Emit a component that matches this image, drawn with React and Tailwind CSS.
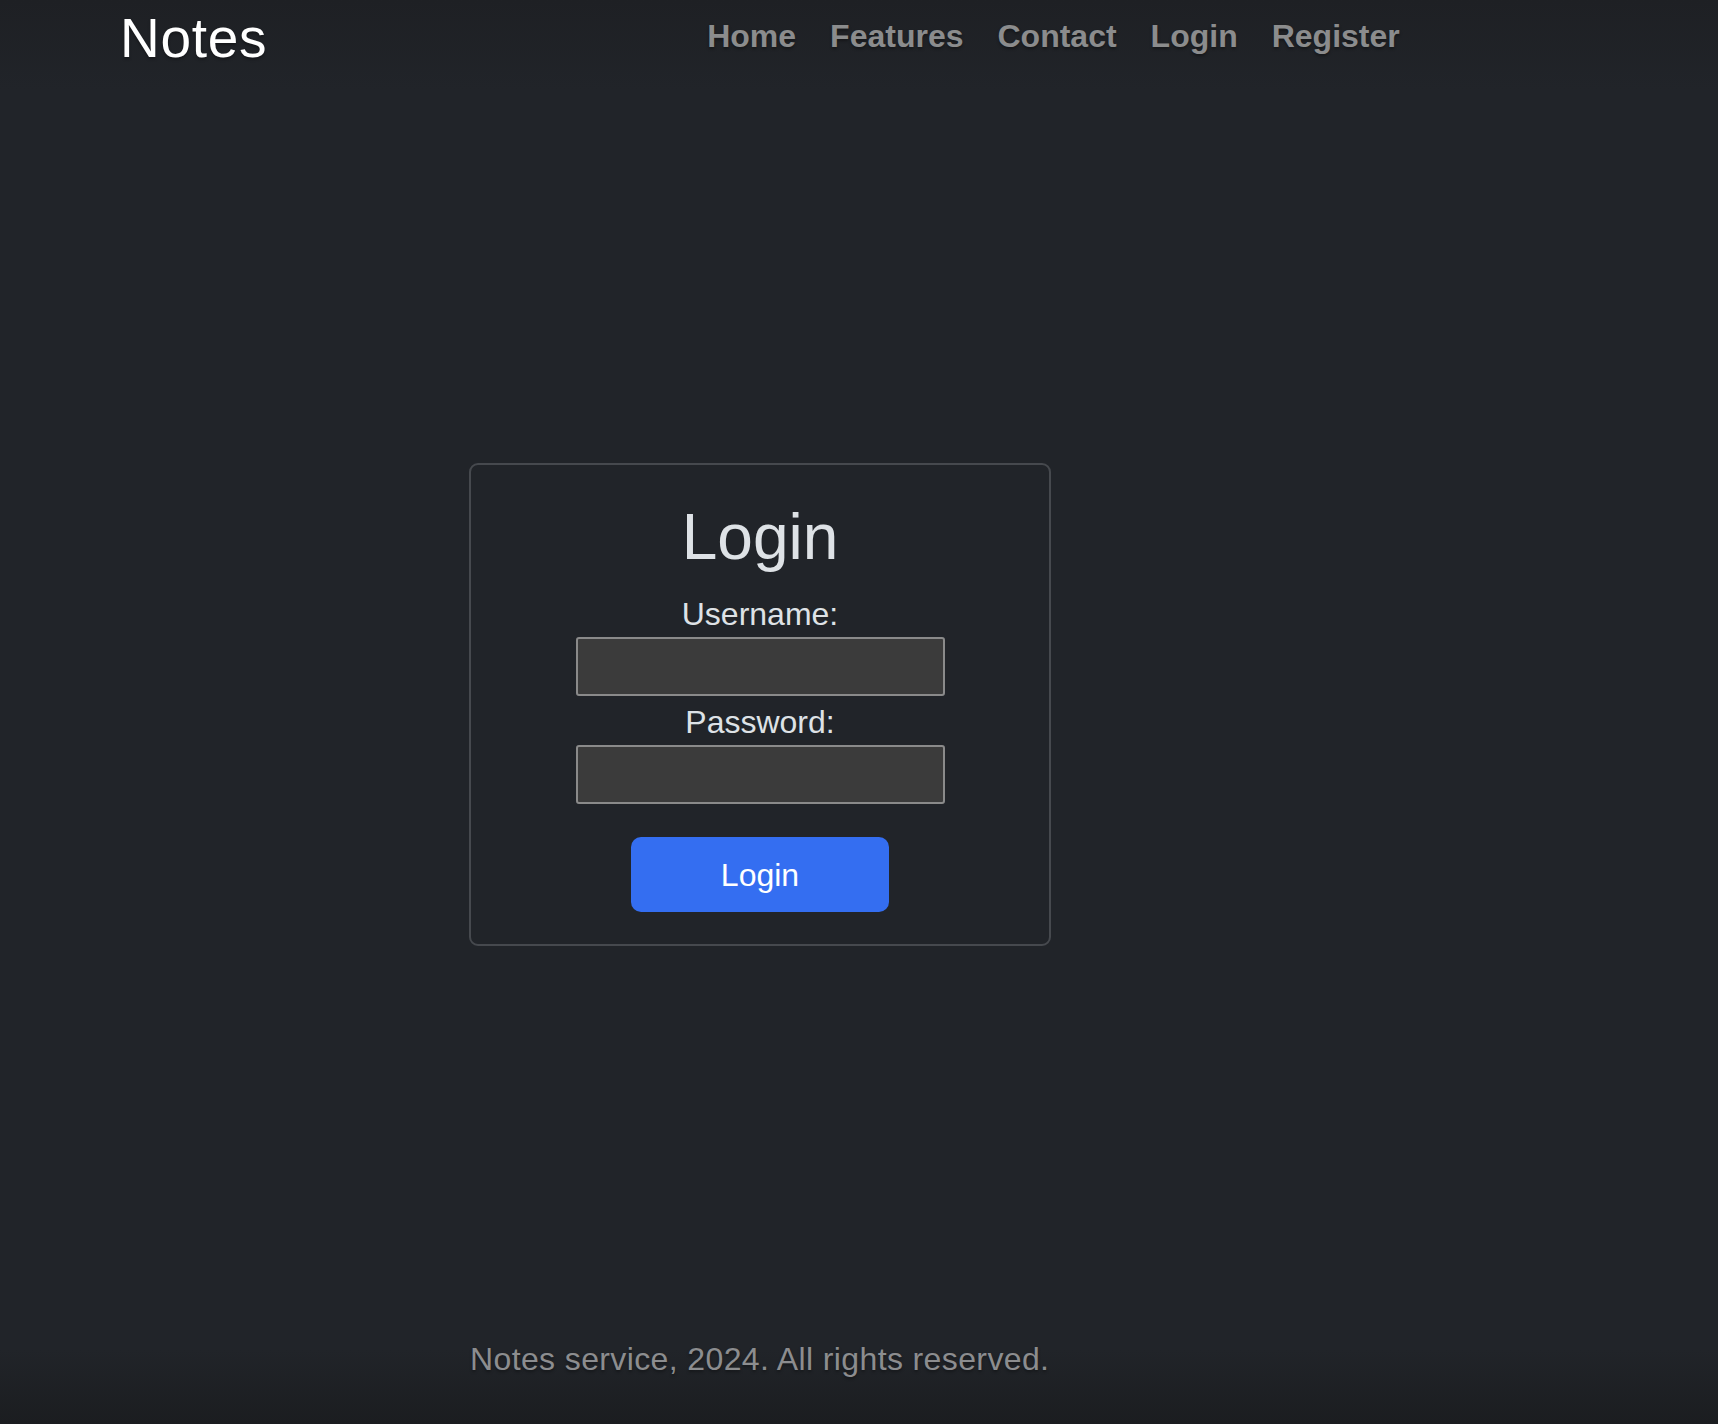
import React from 'react';

// Simple login page: top nav, centred card, footer line
const NAV_LINKS = ['Home', 'Features', 'Contact', 'Login', 'Register'];

const Field = ({ label, type, first }) => (
  <>
    <label
      className={`block text-[32px] leading-none text-[#dee2e6] ${first ? 'mt-[29px]' : 'mt-[10px]'}`}
    >
      {label}
    </label>
    <input
      type={type}
      className="block mx-auto mt-[7px] w-[369px] h-[59px] bg-[#3b3b3b] border-2 border-[#8a8a8a] rounded-[3px] outline-none text-[#dee2e6] text-[24px] px-3"
    />
  </>
);

const App = () => {
  return (
    <div
      className="h-[1424px] overflow-hidden bg-[#212429] bg-[linear-gradient(to_bottom,#1e2024_0px,#212429_90px,#212429_1350px,#1b1d20_1424px)]"
      style={{ fontFamily: '"Liberation Sans", Arial, sans-serif' }}
    >
      {/* Header */}
      <header className="h-[70px] flex items-start pl-[120px]">
        <a className="mt-[11px] text-[55px] leading-none tracking-[0.7px] text-white [text-shadow:0_2px_3px_rgba(0,0,0,0.35)]">
          Notes
        </a>
        <nav className="ml-[440px] mt-[20px] flex gap-[34px]">
          {NAV_LINKS.map((link) => (
            <a
              key={link}
              className="text-[32px] leading-none font-bold text-[#8b8c8d] [text-shadow:0_2px_3px_rgba(0,0,0,0.35)]"
            >
              {link}
            </a>
          ))}
        </nav>
      </header>

      {/* Login card */}
      <main className="ml-[469px] w-[582px] mt-[393px]">
        <div className="border-2 border-[#46494e] rounded-[9px] pt-[40px] pb-[32px] text-center">
          <h1 className="text-[64px] leading-none text-[#dee2e6]">Login</h1>
          <Field label="Username:" type="text" first />
          <Field label="Password:" type="password" />
          <button className="mt-[33px] w-[258px] h-[75px] rounded-[10px] bg-[#346ef1] text-white text-[32px] leading-none">
            Login
          </button>
        </div>

        {/* Footer */}
        <footer className="mt-[397px] ml-[1px] whitespace-nowrap text-[32px] leading-none tracking-[0.38px] text-[#8c8d8f] [text-shadow:0_2px_3px_rgba(0,0,0,0.35)]">
          Notes service, 2024. All rights reserved.
        </footer>
      </main>
    </div>
  );
};

export default App;
